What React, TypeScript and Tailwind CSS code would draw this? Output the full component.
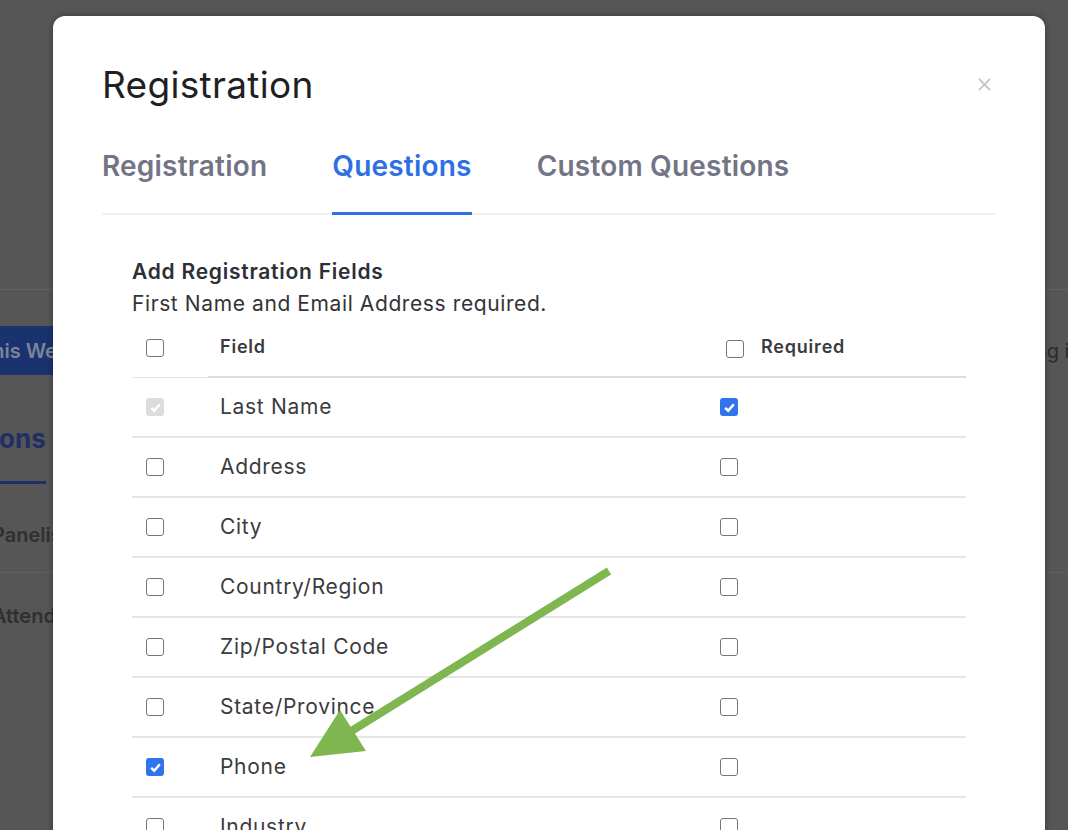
const rows = [
  { label: "Last Name", on: true, locked: true, required: true },
  { label: "Address" },
  { label: "City" },
  { label: "Country/Region" },
  { label: "Zip/Postal Code" },
  { label: "State/Province" },
  { label: "Phone", on: true },
  { label: "Industry" },
];

type BoxProps = { checked?: boolean; disabled?: boolean };

const Tick = () => (
  <svg viewBox="0 0 12 12" className="h-[13px] w-[13px]" fill="none" stroke="#fff" strokeWidth="2.3">
    <path d="M2 6.3 4.8 9 10 3" />
  </svg>
);

const Box = ({ checked, disabled }: BoxProps) => {
  if (checked && disabled) {
    return (
      <span className="flex h-[18px] w-[18px] items-center justify-center rounded-[3px] bg-[#dcdcdc]">
        <Tick />
      </span>
    );
  }
  if (checked) {
    return (
      <span className="flex h-[18px] w-[18px] items-center justify-center rounded-[3px] bg-[#2f74eb]">
        <Tick />
      </span>
    );
  }
  return <span className="block h-[18px] w-[18px] rounded-[3px] border-[1.5px] border-[#767676] bg-white" />;
};

const PageBehind = () => (
  <div className="h-[830px] w-full overflow-hidden bg-[#565656] font-['Inter',sans-serif]">
    <div className="h-[290px] border-b border-[#626262]" />
    <div className="mt-[36px] flex items-center justify-between">
      <div className="-ml-[33px] flex h-[49px] items-center bg-[#1a336f] pl-[12px] pr-[20px] text-[20px] font-semibold text-[#7d8498]">
        This Webinar
      </div>
      <span className="-mr-[32px] whitespace-nowrap text-[20px] text-[#2b2b2b]">Meeting info</span>
    </div>
    <div className="mt-[44px] w-[46px] overflow-hidden border-b-[3px] border-[#1e2f66] pb-[23px]">
      <span className="-ml-[84px] block whitespace-nowrap text-[26px] font-bold text-[#1e2f66]">Questions</span>
    </div>
    <div className="flex h-[89px] items-center overflow-hidden border-b border-[#5f5f5f] pt-[14px]">
      <span className="-ml-[8px] whitespace-nowrap text-[20px] font-semibold text-[#303030]">Panelists</span>
    </div>
    <div className="flex h-[86px] items-center overflow-hidden">
      <span className="-ml-[8px] whitespace-nowrap text-[20px] font-semibold text-[#303030]">Attendees</span>
    </div>
  </div>
);

const Modal = () => (
  <div className="absolute left-[53px] top-[16px] h-[840px] w-[992px] rounded-[12px] bg-white shadow-[0_0_6px_rgba(0,0,0,0.35)] font-['Inter',sans-serif]">
    <div className="px-[49px] pt-[48px]">
      <div className="flex h-[40px] items-center justify-between">
        <h1 className="mt-[2px] text-[37px] font-normal leading-[40px] tracking-[0.3px] text-[#1f1f24]">Registration</h1>
        <svg viewBox="0 0 14 14" className="mr-[5px] h-[13px] w-[13px]" stroke="#c4c4c4" strokeWidth="2">
          <path d="M1 1 13 13M13 1 1 13" />
        </svg>
      </div>

      <div className="mt-[46px] flex gap-[65px] border-b-2 border-[#f1f1f4]">
        <div className="-mb-[2px] border-b-[3px] border-transparent pb-[30px] text-[28px] font-semibold leading-[32px] tracking-[0.2px] text-[#747487]">
          Registration
        </div>
        <div className="-mb-[2px] border-b-[3px] border-[#2f6fe4] pb-[30px] text-[28px] font-semibold leading-[32px] tracking-[0.2px] text-[#2f6fe4]">
          Questions
        </div>
        <div className="-mb-[2px] border-b-[3px] border-transparent pb-[30px] text-[28px] font-semibold leading-[32px] tracking-[0.2px] text-[#747487]">
          Custom Questions
        </div>
      </div>

      <div className="mt-[41px] px-[30px]">
        <div className="text-[21px] font-semibold leading-[32px] tracking-[0.75px] text-[#2e2e36]">Add Registration Fields</div>
        <div className="text-[21px] leading-[32px] tracking-[0.6px] text-[#333338]">First Name and Email Address required.</div>

        <div className="grid grid-cols-[76px_498px_1fr]">
          {/* header */}
          <div className="flex h-[58px] items-center border-b border-[#e6e6e6] pl-[14px] pb-[2px]">
            <Box />
          </div>
          <div className="flex h-[58px] items-center border-b-2 border-[#dedede] pl-[12px] pb-[4px] text-[18px] font-semibold tracking-[0.8px] text-[#3a3a40]">
            Field
          </div>
          <div className="flex h-[58px] items-center gap-[17px] border-b-2 border-[#dedede] pl-[20px] pb-[4px]">
            <span className="mt-[6px]">
              <Box />
            </span>
            <span className="text-[18px] font-semibold tracking-[0.8px] text-[#3a3a40]">Required</span>
          </div>

          {/* field rows */}
          {rows.map((r) => (
            <div key={r.label} className="contents">
              <div className="flex h-[60px] items-center border-b-2 border-[#e6e6e6] pl-[14px]">
                <Box checked={r.on} disabled={r.locked} />
              </div>
              <div className="flex h-[60px] items-center border-b-2 border-[#e6e6e6] pl-[12px] text-[21px] tracking-[0.7px] text-[#3b3b40]">
                {r.label}
              </div>
              <div className="flex h-[60px] items-center border-b-2 border-[#e6e6e6] pl-[14px]">
                <Box checked={r.required} />
              </div>
            </div>
          ))}
        </div>
      </div>
    </div>
  </div>
);

// green pointer drawn over the Phone row
const Arrow = () => (
  <svg className="pointer-events-none absolute left-0 top-0" width="1068" height="830">
    <line x1="609" y1="571" x2="345" y2="735" stroke="#7fb650" strokeWidth="8" />
    <polygon points="310,757 340,710 366,751" fill="#7fb650" />
  </svg>
);

export default function App() {
  return (
    <div className="relative h-[830px] w-full overflow-hidden">
      <PageBehind />
      <Modal />
      <Arrow />
    </div>
  );
}
